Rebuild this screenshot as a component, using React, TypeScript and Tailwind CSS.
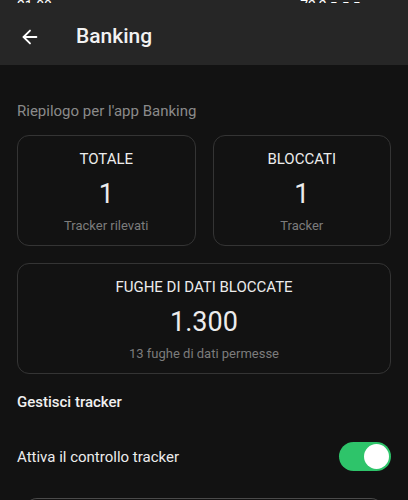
import { ArrowLeft } from 'lucide-react'

const stats = [
  { title: 'TOTALE', value: '1', note: 'Tracker rilevati' },
  { title: 'BLOCCATI', value: '1', note: 'Tracker' },
]

function StatCard({ title, value, note }: { title: string; value: string; note: string }) {
  return (
    <div className="flex h-[111px] flex-col items-center rounded-[12px] border border-[#343434] pt-[13px]">
      <div className="text-[15px] leading-[20px] text-[#ececec]">{title}</div>
      <div className="mt-[9px] text-[27px] leading-[32px] text-[#ececec]">{value}</div>
      <div className="mt-[7px] text-[13px] leading-[18px] text-[#7c7c7c]">{note}</div>
    </div>
  )
}

function Toggle() {
  return (
    <div className="flex h-[29px] w-[52px] items-center justify-end rounded-full bg-[#2ec46a] pr-[2px]">
      <div className="h-[25px] w-[25px] rounded-full bg-white" />
    </div>
  )
}

export default function App() {
  return (
    <div className="h-[500px] w-[408px] overflow-hidden bg-[#121212] font-['Roboto',sans-serif]">
      <header className="h-[65px] bg-[#262626]">
        {/* status bar, mostly scrolled out of view */}
        <div className="flex h-[3px] items-end justify-between overflow-hidden px-[17px]">
          <span className="translate-y-[10px] text-[14px] leading-[14px] text-white">21:00</span>
          <span className="translate-y-[10px] pr-[30px] text-[14px] leading-[14px] text-white">◔ &nbsp; ▾ ▴ 72,2 ▮ ▮ ▮</span>
        </div>
        <div className="flex h-[62px] items-center pl-[19px] pt-[6px]">
          <ArrowLeft className="h-[22px] w-[22px] text-white" strokeWidth={2} />
          <h1 className="ml-[35px] text-[21px] font-medium text-[#f2f2f2]">Banking</h1>
        </div>
      </header>

      <main className="px-[17px]">
        <p className="pt-[36px] text-[15px] leading-[20px] text-[#8a8a8a]">Riepilogo per l'app Banking</p>

        <div className="mt-[14px] grid grid-cols-2 gap-[17px]">
          {stats.map((s) => (
            <StatCard key={s.title} {...s} />
          ))}
        </div>

        <div className="mt-[17px] flex h-[111px] flex-col items-center rounded-[12px] border border-[#343434] pt-[13px]">
          <div className="text-[15px] leading-[20px] text-[#ececec]">FUGHE DI DATI BLOCCATE</div>
          <div className="mt-[9px] text-[27px] leading-[32px] text-[#ececec]">1.300</div>
          <div className="mt-[7px] text-[13px] leading-[18px] text-[#7c7c7c]">13 fughe di dati permesse</div>
        </div>

        <h2 className="mt-[18px] text-[15px] font-medium leading-[20px] text-[#f0f0f0]">Gestisci tracker</h2>

        <div className="mt-[30px] flex items-center justify-between">
          <span className="text-[15px] leading-[20px] text-[#ececec]">Attiva il controllo tracker</span>
          <Toggle />
        </div>

        <div className="mx-[8px] mt-[27px] h-[20px] rounded-t-[12px] border-t border-[#4a4a4a]" />
      </main>
    </div>
  )
}
